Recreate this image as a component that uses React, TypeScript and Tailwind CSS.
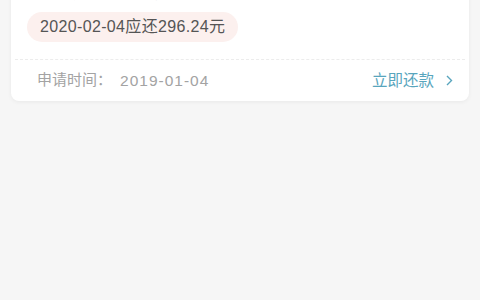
export default function App() {
  return (
    <div
      className="w-[480px] h-[300px] overflow-hidden bg-[#f6f6f6]"
      style={{ fontFamily: '"Liberation Sans", "Noto Sans CJK SC", sans-serif' }}
    >
      <div className="px-[11px]">
        <div className="-mt-[16px] rounded-lg bg-white shadow-[0_1px_4px_rgba(0,0,0,0.06)]">
          <div className="px-4 pb-[17px]">
            <div className="flex h-[20px] items-center text-[13px] leading-[20px] text-[#d6d6d6]">
              <span className="w-[213px] pl-[2px]">借款金额：3000.00元，分12期</span>
              <span>每期本金</span>
            </div>
            <div className="mt-[8px] inline-flex h-[30px] items-center rounded-full bg-[#fcf0ee] px-[13px] text-[16px] tracking-[0.35px] text-[#555]">
              2020-02-04应还296.24元
            </div>
          </div>
          <div className="mx-[4px] border-t border-dashed border-[#ececec]" />
          <div className="flex h-[41px] items-center justify-between pl-[26px] pr-[16px] text-[15px]">
            <div className="flex items-center text-[#a3a3a3]">
              <span>申请时间：</span>
              <span className="ml-[8px] text-[15.5px] tracking-[1px]">2019-01-04</span>
            </div>
            <div className="flex items-center gap-[12px] text-[15.5px] text-[#58a5bd]">
              <span>立即还款</span>
              <svg width="7" height="11" viewBox="0 0 7 11" fill="none">
                <path d="M1 1l4.5 4.5L1 10" stroke="#58a5bd" strokeWidth="1.4" />
              </svg>
            </div>
          </div>
        </div>
      </div>
    </div>
  );
}
